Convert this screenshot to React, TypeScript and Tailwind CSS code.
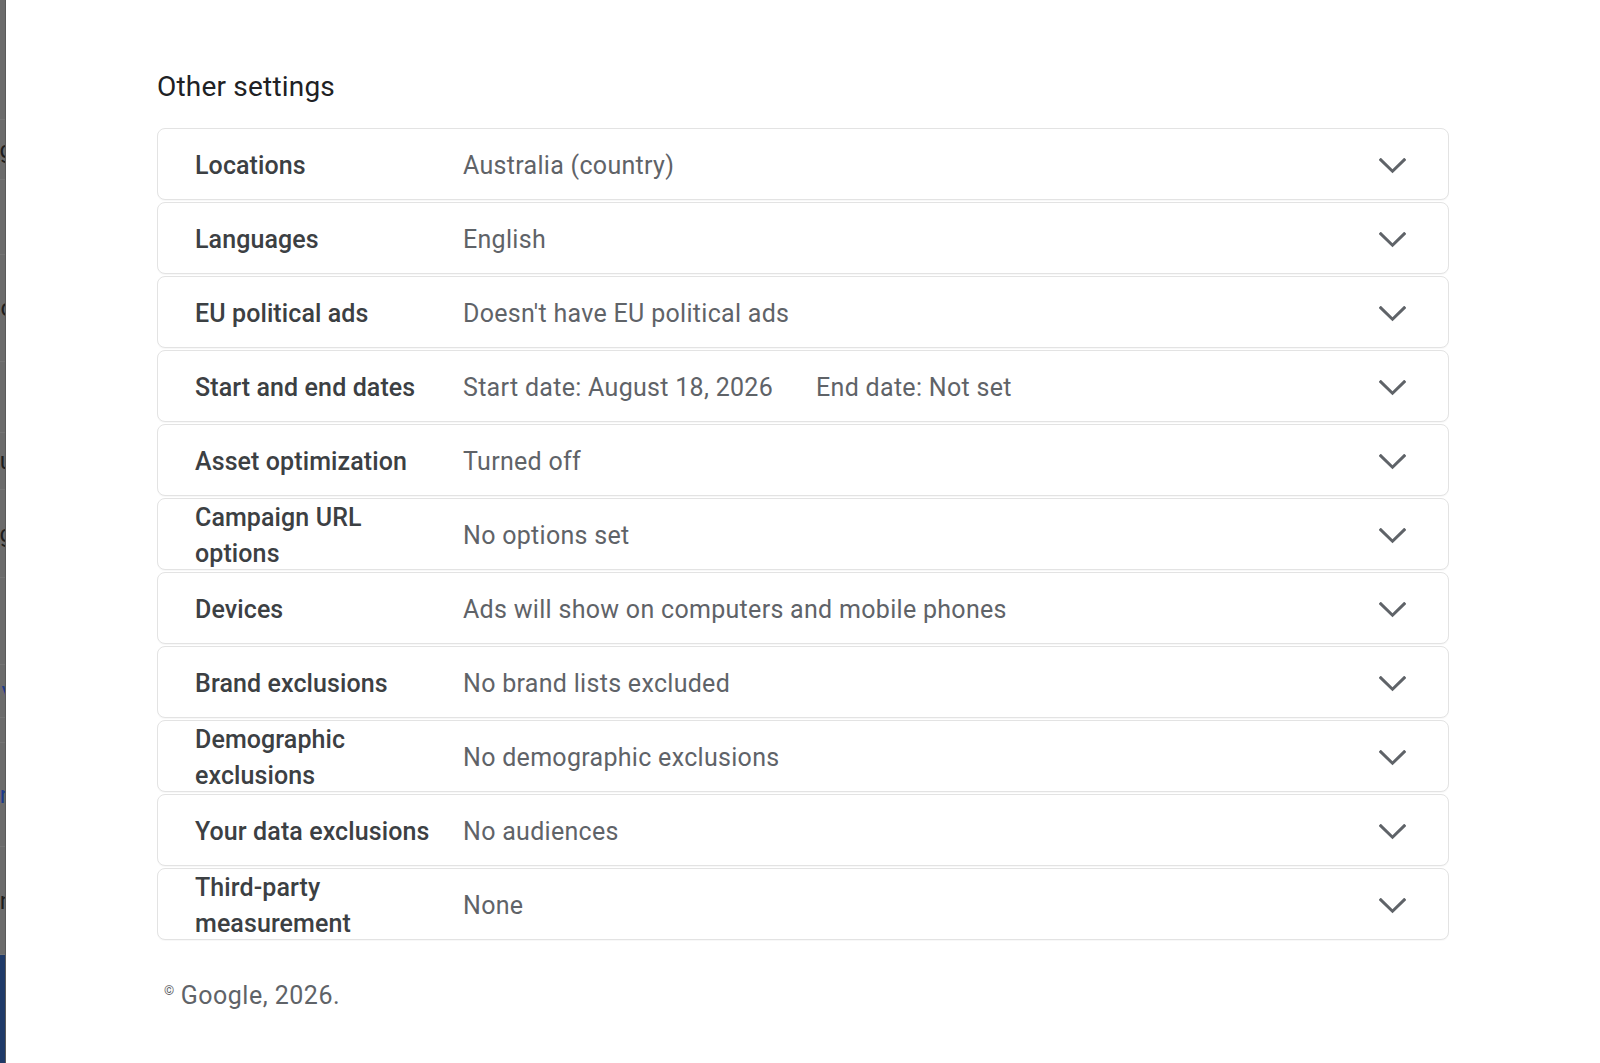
import React from "react";

type Setting = {
  label: string[];
  values: string[];
};

const SETTINGS: Setting[] = [
  { label: ["Locations"], values: ["Australia (country)"] },
  { label: ["Languages"], values: ["English"] },
  { label: ["EU political ads"], values: ["Doesn't have EU political ads"] },
  { label: ["Start and end dates"], values: ["Start date: August 18, 2026", "End date: Not set"] },
  { label: ["Asset optimization"], values: ["Turned off"] },
  { label: ["Campaign URL", "options"], values: ["No options set"] },
  { label: ["Devices"], values: ["Ads will show on computers and mobile phones"] },
  { label: ["Brand exclusions"], values: ["No brand lists excluded"] },
  { label: ["Demographic", "exclusions"], values: ["No demographic exclusions"] },
  { label: ["Your data exclusions"], values: ["No audiences"] },
  { label: ["Third-party", "measurement"], values: ["None"] },
];

// bits of the page that peek out behind the dialog on the left edge
const BACKDROP = [
  { h: "h-[120px]", ch: "", blue: false },
  { h: "h-[60px]", ch: "g", blue: false },
  { h: "h-[75px]", ch: "r", blue: false },
  { h: "h-[107px]", ch: "c", blue: false },
  { h: "h-[71px]", ch: "", blue: false },
  { h: "h-[57px]", ch: "u", blue: false },
  { h: "h-[88px]", ch: "g", blue: false },
  { h: "h-[87px]", ch: "i", blue: false },
  { h: "h-[53px]", ch: "v", blue: true },
  { h: "h-[25px]", ch: "", blue: false },
  { h: "h-[104px]", ch: "n", blue: true },
  { h: "h-[108px]", ch: "n", blue: false },
];

function Chevron() {
  return (
    <svg width="27" height="16" viewBox="0 0 27 16" fill="none" className="shrink-0">
      <path
        d="M1.8 1.8 L13.5 13.2 L25.2 1.8"
        stroke="#5f6368"
        strokeWidth="3"
        strokeLinecap="square"
      />
    </svg>
  );
}

export default function App() {
  return (
    <div
      className="flex h-[1063px] w-[1600px] overflow-hidden bg-white"
      style={{ fontFamily: "Roboto, 'Liberation Sans', sans-serif" }}
    >
      {/* Dimmed page behind */}
      <div className="flex w-[6px] shrink-0 flex-col overflow-hidden border-r border-[#5a5a5a] bg-[#6b6b6b]">
        {BACKDROP.map((b, i) => (
          <div
            key={i}
            className={`flex ${b.h} shrink-0 items-center justify-end border-b border-[#747474] text-[24px] leading-none ${
              b.blue ? "text-[#1b3a8a]" : "text-[#1d1d1d]"
            }`}
          >
            <span className="-mr-[8px]">{b.ch}</span>
          </div>
        ))}
        <div className="flex-1 bg-[#1f3a68]" />
      </div>

      <div className="flex-1 pl-[151px]">
        <h2 className="mt-[69px] text-[28px] leading-[36px] font-normal tracking-[0.2px] text-[#202124]">
          Other settings
        </h2>

        <div className="mt-[23px] flex w-[1292px] flex-col gap-[2px]">
          {SETTINGS.map((s) => (
            <div
              key={s.label.join(" ")}
              className="flex h-[72px] items-center rounded-[8px] border border-[#e3e3e3] bg-white pl-[37px] pr-[42px] pt-[4px] shadow-[0_1px_1px_rgba(0,0,0,0.03)]"
            >
              <div className="w-[268px] shrink-0 text-[25px] leading-[36px] font-medium tracking-[0.1px] text-[#3c4043]">
                {s.label.map((line) => (
                  <div key={line}>{line}</div>
                ))}
              </div>
              <div className="flex flex-1 items-center gap-[43px] text-[25px] leading-[36px] tracking-[0.3px] text-[#5f6368]">
                {s.values.map((v) => (
                  <span key={v}>{v}</span>
                ))}
              </div>
              <Chevron />
            </div>
          ))}
        </div>

        <div className="mt-[38px] flex items-start pl-[7px] text-[25px] leading-[36px] tracking-[0.5px] text-[#5f6368]">
          <span className="mr-[6px] mt-[6px] text-[13px] leading-none">©</span>
          <span>Google, 2026.</span>
        </div>
      </div>
    </div>
  );
}
